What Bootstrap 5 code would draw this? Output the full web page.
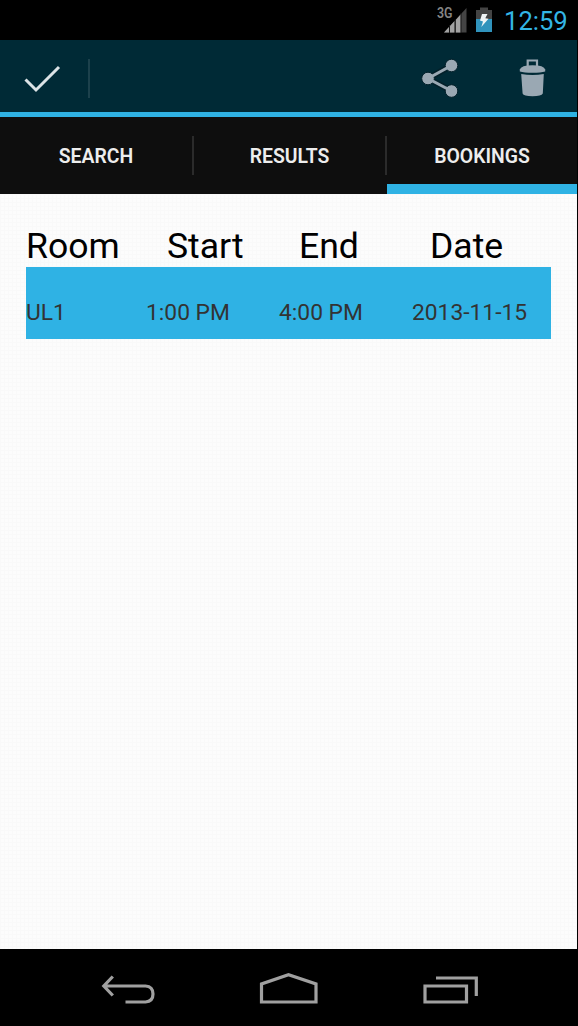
<!DOCTYPE html>
<html lang="en">
<head>
<meta charset="utf-8">
<meta name="viewport" content="width=device-width, initial-scale=1">
<title>Room bookings</title>
<link href="https://cdn.jsdelivr.net/npm/bootstrap@5.3.0/dist/css/bootstrap.min.css" rel="stylesheet">
<style>
  body { background: #000; font-family: Roboto, "Liberation Sans", sans-serif; }
  .screen { width: 577px; height: 1026px; }
  .status { height: 40px; }
  .clock { font-size: 25.6px; line-height: 42px; color: #33b5e5; width: 73px; white-space: nowrap; }
  .action-bar { height: 77px; background: #002a36; border-bottom: 5px solid #2fb2e4; }
  .tabs { height: 77px; background: #0e0e0e; }
  .tabs .nav-link { color: #ededed; font-size: 19.4px; font-weight: 600; line-height: 79px; height: 77px; padding: 0; border-radius: 0; }
  .tabs .nav-link.active { border-bottom: 10px solid #2fb2e4; }
  .first-tab { width: 192px; }
  .middle-tab { width: 191px; }
  .divider { width: 2px; height: 39px; background: #2b2b2b; margin-top: 19px; }
  .content {
    padding: 29px 26px 0;
    background-color: #fcfcfc;
    background-image: linear-gradient(#f9f9f9 1px, transparent 1px), linear-gradient(90deg, #f9f9f9 1px, transparent 1px);
    background-size: 4px 4px;
  }
  .cols { display: grid; white-space: nowrap; }
  .heads { grid-template-columns: 141px 132px 131px 1fr; font-size: 35.6px; line-height: 46px; height: 44px; color: #000; }
  .booking { grid-template-columns: 120px 133px 133px 1fr; font-size: 22.8px; line-height: 31px; height: 72px; padding-top: 30px; background: #2fb2e4; color: #333; }
  .navbar-keys { height: 77px; }
</style>
</head>
<body>
<div class="screen d-flex flex-column">
  <header class="status d-flex justify-content-end">
    <svg width="68" height="40" viewBox="432 0 68 40" aria-hidden="true">
      <text x="437" y="18.200" font-size="13.800" font-weight="600" textLength="15.500" lengthAdjust="spacingAndGlyphs" fill="#858585">3G</text>
      <path d="M444 32.500 466.500 8V32.500Z" fill="#444"/>
      <path d="M444 32.500 449 27V32.500ZM450 26 454.500 21V32.500H450ZM455.700 20 460.800 14.200V32.500H455.700Z" fill="#a2a2a2"/>
      <path d="M449.500 25V33M455.200 19V33M461 13V33" stroke="#161616"/>
      <path d="M476 10H480V7.500H488V10H492V20H476Z" fill="#444"/>
      <path d="M476 19H492V32H476Z" fill="#3093bc"/>
      <path d="M482 14H487.500L485.300 18.200 488.500 18.800 481.300 27 483 21.500 480 20.500Z" fill="#f0f4f5"/>
    </svg>
    <div class="clock ms-1">12:59</div>
  </header>

  <div class="action-bar d-flex">
    <svg class="me-auto" width="100" height="72" viewBox="0 40 100 72" role="img" aria-label="Done">
      <path d="M25.500 79.500 36 90 59 67" fill="none" stroke="#dce3e6" stroke-width="3"/>
      <path d="M89 59V98" stroke="#1c414c" stroke-width="2"/>
    </svg>
    <svg width="92" height="72" viewBox="394 40 92 72" role="img" aria-label="Share">
      <g stroke="#03202a" stroke-width="6" fill="none"><path d="M451.500 65.500 428 78.500 451.500 91"/></g>
      <g fill="#9aa8b3" stroke="#03202a"><circle cx="428" cy="78.500" r="6.300"/><circle cx="451.500" cy="65.500" r="6.300"/><circle cx="451.500" cy="91" r="6.300"/></g>
      <path d="M451.500 65.500 428 78.500 451.500 91" stroke="#9aa8b3" stroke-width="3" fill="none"/>
    </svg>
    <svg width="91" height="72" viewBox="486 40 91 72" role="img" aria-label="Delete">
      <path d="M527.700 66V60.500H537V66" fill="none" stroke="#9aa8b3" stroke-width="2.200"/>
      <path d="M519.800 71.500V69.500Q521 65.200 532.500 65.200T545.200 69.500V71.500Q541 72.800 532.500 72.800T519.800 71.500Z" fill="#9aa8b3"/>
      <path d="M521.200 74Q532.500 76 543.800 74L542.800 93.500Q541.500 96.200 532.500 96.200T522.600 93.500Z" fill="#9aa8b3"/>
    </svg>
  </div>

  <nav class="tabs nav flex-nowrap text-center">
    <a class="nav-link first-tab" href="#">SEARCH</a>
    <div class="divider"></div>
    <a class="nav-link middle-tab" href="#">RESULTS</a>
    <div class="divider"></div>
    <a class="nav-link active flex-fill" href="#">BOOKINGS</a>
  </nav>

  <main class="content flex-fill">
    <div class="cols heads"><div>Room</div><div>Start</div><div>End</div><div>Date</div></div>
    <div class="cols booking"><div>UL1</div><div>1:00 PM</div><div>4:00 PM</div><div>2013-11-15</div></div>
  </main>

  <footer class="navbar-keys">
    <svg class="d-block" width="577" height="77" viewBox="0 949 577 77" fill="none" stroke="#a0a0a0" stroke-width="3.200" role="img" aria-label="Back, home and recent apps">
      <path d="M104 986H145.500Q153 986.500 153 994T145.500 1002H125.500M112.800 976.500 103.800 986 112.800 995.500"/>
      <path d="M261.500 1002V984L288.500 974.800 316 984V1002Z"/>
      <path d="M425 986H466.500V1002H425ZM436 978H476.300V996"/>
    </svg>
  </footer>
</div>
<script src="https://cdn.jsdelivr.net/npm/bootstrap@5.3.0/dist/js/bootstrap.bundle.min.js"></script>
</body>
</html>
